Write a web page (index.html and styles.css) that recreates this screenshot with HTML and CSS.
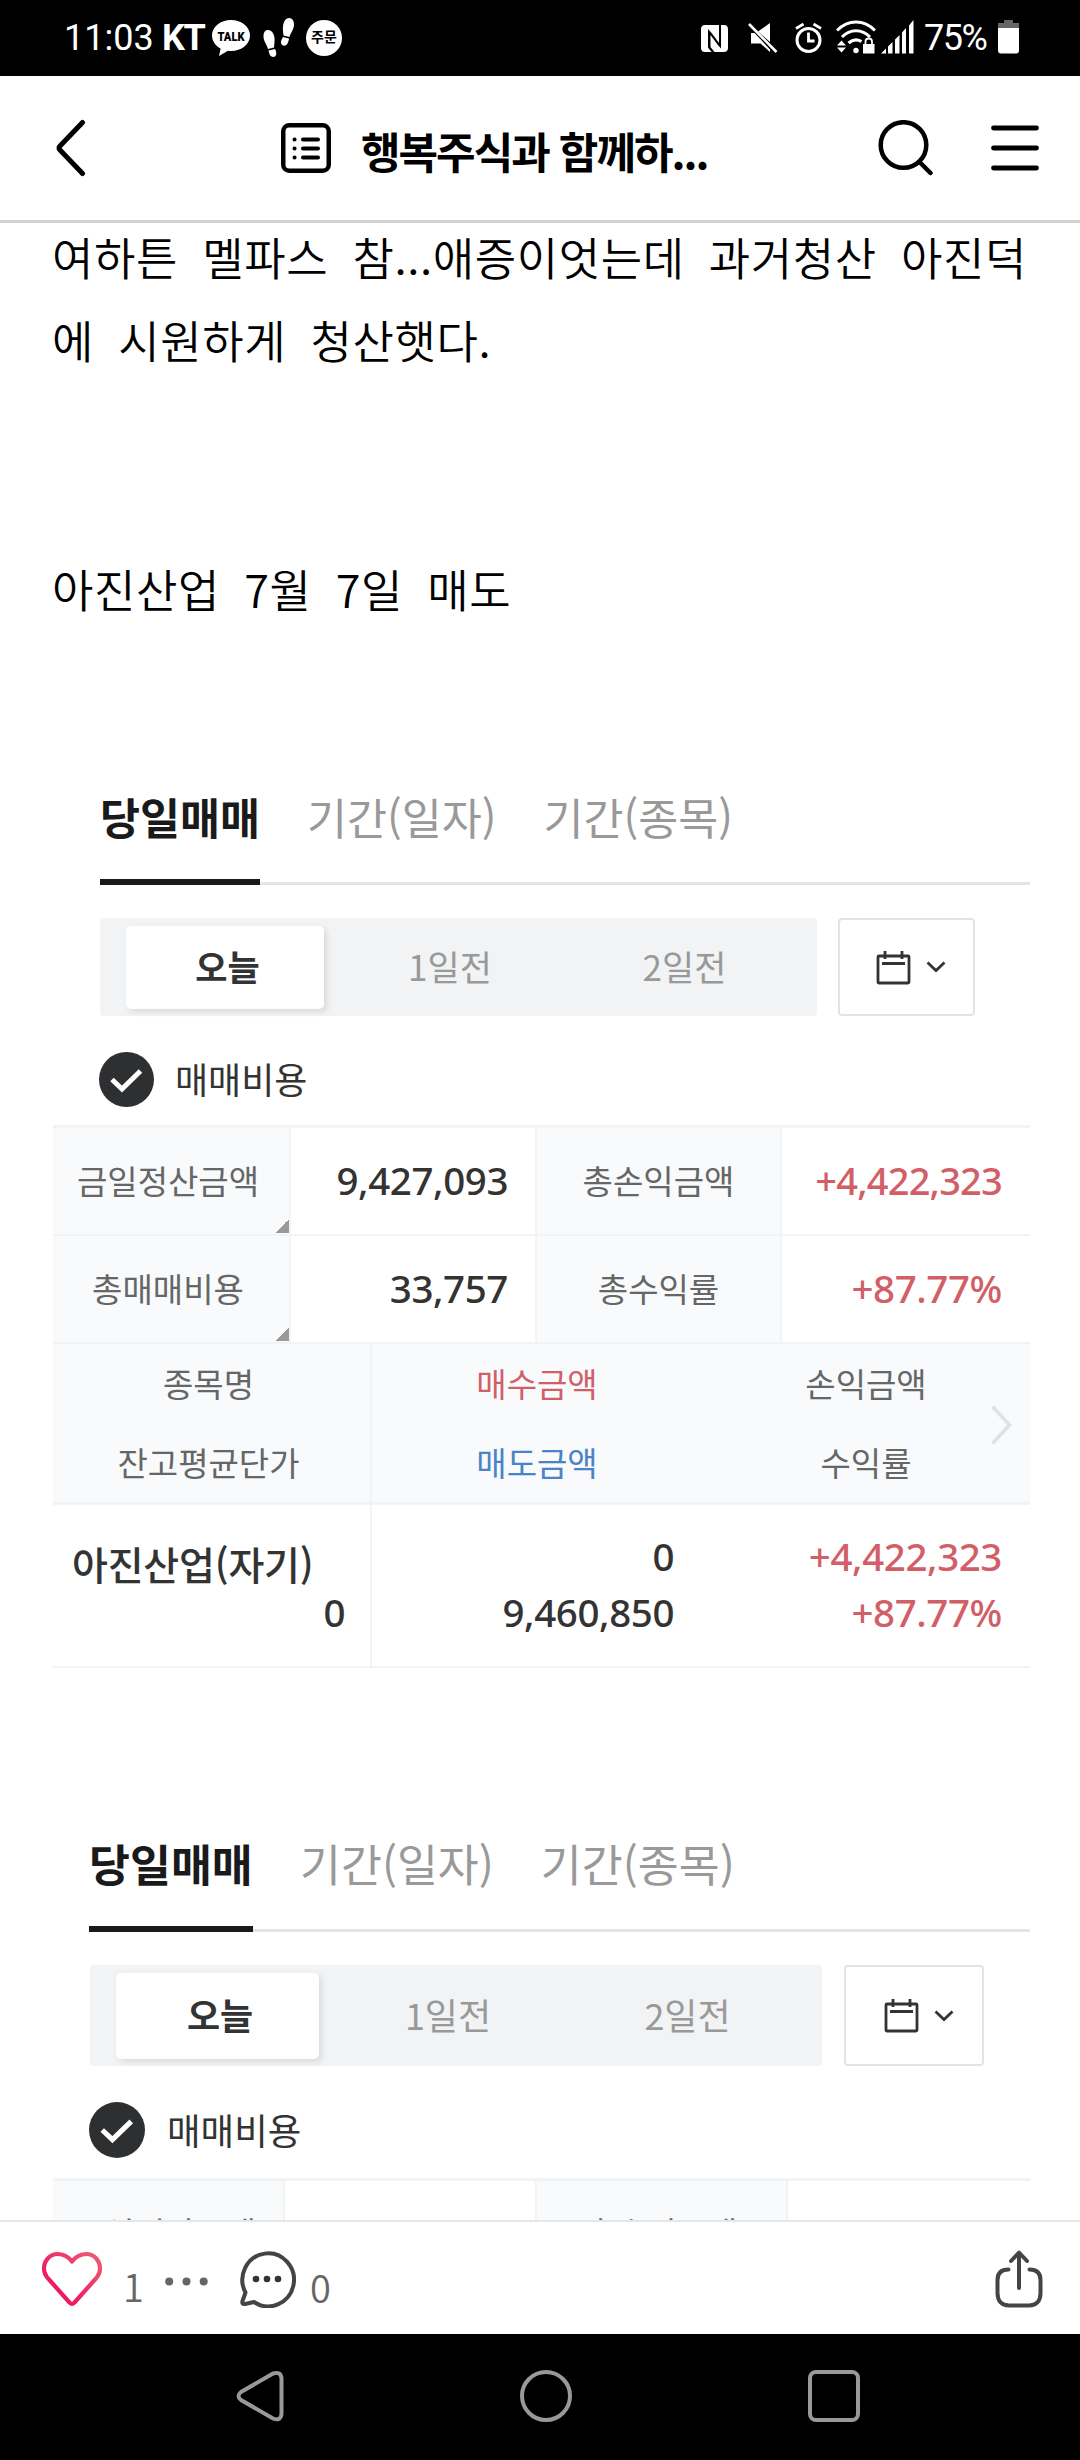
FILE: index.html
```html
<!DOCTYPE html>
<html lang="ko">
<head>
    <meta charset="UTF-8">
    <meta name="viewport" content="width=device-width, initial-scale=1.0">
    <title>행복주식과 함께하...</title>
    <link rel="stylesheet" href="styles.css">
</head>
<body>
    <!-- 상태바 -->
    <div class="status-bar">
        <span class="time">11:03</span>
        <span class="carrier">KT</span>
        <svg class="icon-talk" width="38" height="36" viewBox="0 0 38 36">
            <path fill="#fff" d="M19 0C8.500 0 0 6.800 0 15.500c0 5.500 3.500 10.300 8.600 13L7 36l9-5.200c1 .1 2 .2 3 .2 10.500 0 19-6.800 19-15.500S29.500 0 19 0z"/>
            <text x="19" y="20.500" text-anchor="middle" textLength="27" lengthAdjust="spacingAndGlyphs">TALK</text>
        </svg>
        <svg class="icon-steps" width="31" height="40" viewBox="0 0 31 40" fill="#fff">
            <path d="M5 12c4 0 6 4 6.500 8 .3 3-.2 6-.5 9.500l-6 1.500C4 27 .5 23 .5 18.500.5 14.500 2 12 5 12zM5.500 32.500l6.500-1.500c1.500 3 2 6 0 7.500-2 1.200-4.500 0-5.300-2-.5-1.300-1-2.500-1.200-4z"/>
            <path d="M26 0c3.500 0 5 3 5 6.500 0 5-3.500 8.500-4.500 12.500l-6-1.500c-.4-3.500-.9-6-.5-9C20.500 4 22.500 0 26 0zM20 19l6 1.500c-.3 2-.7 3.500-1.500 5-1 2-3.500 2.800-5.300 1.500-2-1.500-1.200-5 .8-8z"/>
        </svg>
        <span class="icon-order">주문</span>

        <svg class="icon-nfc" width="27" height="27" viewBox="0 0 27 27">
            <path fill="#fff" d="M4 0h14v18L11 8.500 7 4v18.500l3.500 4.500H4c-2.500 0-4-1.500-4-4V4c0-2.500 1.500-4 4-4zM20 0h3c2.500 0 4 1.500 4 4v19c0 2.500-1.500 4-4 4H13.500L9.500 22V10l7 9.500 3.500 4z"/>
        </svg>
        <svg class="icon-mute" width="30" height="30" viewBox="0 0 30 30">
            <path fill="#fff" d="M10 8.500L22 0v19zM3 10h3.500L22 26.500V29l-9.500-8.500H3z"/>
            <path stroke="#fff" stroke-width="2.600" d="M1 1l27.500 28"/>
        </svg>
        <svg class="icon-alarm" width="27" height="30" viewBox="0 0 27 30" fill="none" stroke="#fff" stroke-width="3">
            <circle cx="13.500" cy="17" r="11.500"/>
            <path stroke-width="2.800" d="M13.500 9.500v8.500h6M1 5.500L8.500 1M26 5.500L18.500 1"/>
        </svg>
        <svg class="icon-wifi" width="40" height="34" viewBox="0 0 40 34">
            <g fill="none" stroke="#fff" stroke-width="3">
                <path d="M1 10.500C12-1 28-1 39 10.500"/>
                <path d="M6 17c8-8.500 20-8.500 28 0"/>
                <path d="M12.500 23c4-3.500 8.500-4 13-1.500"/>
            </g>
            <circle cx="20" cy="30.500" r="2.700" fill="#fff"/>
            <path fill="#fff" d="M1 25.500l4.500-5 4.500 5zM1 27.500l4.500 5 4.500-5zM27 24h11.500v9.500H27z"/>
            <path fill="none" stroke="#fff" stroke-width="1.800" d="M29.500 25v-3.500c0-4 6.500-4 6.500 0V25"/>
        </svg>
        <svg class="icon-signal" width="33" height="34" viewBox="0 0 33 34" fill="#fff">
            <path d="M0 33.500l5-5v5zM7 26.500l4.500-4.500v11.500H7zM14 19.500l4.500-4.500v18.500H14zM21 12.500L25 8v25.500h-4zM28 5.500L32.500 0v33.500H28z"/>
        </svg>
        <span class="battery-text">75%</span>
        <svg class="icon-battery" width="21" height="34" viewBox="0 0 21 34">
            <path fill="#666" d="M6 0h9v3h6v6H0V3h6z"/>
            <path fill="#fff" d="M0 8h21v22.500c0 2-1 3-3 3H3c-2 0-3-1-3-3z"/>
        </svg>
    </div>

    <!-- 상단 헤더 -->
    <header class="header">
        <svg class="back" width="30" height="58" viewBox="0 0 30 58" fill="none" stroke="#000" stroke-width="5" stroke-linecap="round" stroke-linejoin="round">
            <path d="M26.500 3.500L4 27q-2 2 0 4l22.500 23.500"/>
        </svg>
        <svg class="board" width="50" height="50" viewBox="0 0 50 50" fill="none" stroke="#000" stroke-width="4.500" stroke-linecap="round">
            <rect x="2.250" y="2.250" width="45.500" height="45.500" rx="6"/>
            <path stroke-width="4" d="M22 16.500h15M22 25.500h15M22 34.500h15M13.500 16.500h.1M13.500 25.500h.1M13.500 34.500h.1"/>
        </svg>
        <h1 class="title">행복주식과 함께하...</h1>
        <svg class="search" width="56" height="56" viewBox="0 0 56 56" fill="none" stroke="#000" stroke-width="4.500" stroke-linecap="round">
            <circle cx="25.500" cy="25" r="22.800"/>
            <path d="M41.500 42L52.500 53"/>
        </svg>
        <svg class="menu" width="48" height="46" viewBox="0 0 48 46" stroke="#000" stroke-width="4.800" stroke-linecap="round">
            <path d="M2.500 3h43M2.500 23h43M2.500 43h43"/>
        </svg>
    </header>

    <!-- 본문 -->
    <main class="content">
        <div class="article">
            <p>여하튼 멜파스 참...애증이엇는데 과거청산 아진덕<br>에 시원하게 청산햇다.</p>
            <p><br></p>
            <p><br></p>
            <p>아진산업 7월 7일 매도</p>
        </div>

        <section class="trade">
            <div class="tabs">
                <span class="tab active">당일매매</span>
                <span class="tab">기간(일자)</span>
                <span class="tab">기간(종목)</span>
            </div>
            <div class="filter">
                <div class="segment">
                    <span class="day active">오늘</span>
                    <span class="day">1일전</span>
                    <span class="day">2일전</span>
                </div>
                <div class="calendar">
                    <svg width="35" height="35" viewBox="0 0 35 35" fill="none" stroke="#333" stroke-width="2.800">
                        <rect x="2" y="6" width="31" height="27" rx="1"/>
                        <path d="M6 13.500h23M9 1v8M26 1v8"/>
                    </svg>
                    <svg width="20" height="12" viewBox="0 0 20 12" fill="none" stroke="#333" stroke-width="2.800">
                        <path d="M1.500 1.500l8.500 8 8.500-8"/>
                    </svg>
                </div>
            </div>
            <div class="cost">
                <svg class="check" viewBox="0 0 55 55">
                    <circle cx="27.500" cy="27.500" r="27.500" fill="#2d2f31"/>
                    <path fill="none" stroke="#fff" stroke-width="5" d="M13 27.500l10 9.500 18.500-18"/>
                </svg>
                <span>매매비용</span>
            </div>

            <div class="summary">
                <div class="label more">금일정산금액</div>
                <div class="value">9,427,093</div>
                <div class="label">총손익금액</div>
                <div class="value up narrow">+4,422,323</div>
                <div class="label more">총매매비용</div>
                <div class="value">33,757</div>
                <div class="label">총수익률</div>
                <div class="value up">+87.77%</div>
            </div>
            <div class="list-head">
                <div class="col-name"><span>종목명</span><span>잔고평균단가</span></div>
                <div class="col-amount"><span class="up">매수금액</span><span class="down">매도금액</span></div>
                <div class="col-profit"><span>손익금액</span><span>수익률</span></div>
                <svg class="next" width="21" height="40" viewBox="0 0 21 40" fill="none" stroke="#e0e1e2" stroke-width="3.500">
                    <path d="M1.500 1.500L18.500 20l-17 18.500"/>
                </svg>
            </div>
            <div class="list-row">
                <div class="col-name"><span class="stock">아진산업(자기)</span><span>0</span></div>
                <div class="col-amount"><span>0</span><span>9,460,850</span></div>
                <div class="col-profit up"><span>+4,422,323</span><span>+87.77%</span></div>
            </div>
        </section>

        <section class="trade large">
            <div class="tabs">
                <span class="tab active">당일매매</span>
                <span class="tab">기간(일자)</span>
                <span class="tab">기간(종목)</span>
            </div>
            <div class="filter">
                <div class="segment">
                    <span class="day active">오늘</span>
                    <span class="day">1일전</span>
                    <span class="day">2일전</span>
                </div>
                <div class="calendar">
                    <svg width="35" height="35" viewBox="0 0 35 35" fill="none" stroke="#333" stroke-width="2.800">
                        <rect x="2" y="6" width="31" height="27" rx="1"/>
                        <path d="M6 13.500h23M9 1v8M26 1v8"/>
                    </svg>
                    <svg width="20" height="12" viewBox="0 0 20 12" fill="none" stroke="#333" stroke-width="2.800">
                        <path d="M1.500 1.500l8.500 8 8.500-8"/>
                    </svg>
                </div>
            </div>
            <div class="cost">
                <svg class="check" viewBox="0 0 55 55">
                    <circle cx="27.500" cy="27.500" r="27.500" fill="#2d2f31"/>
                    <path fill="none" stroke="#fff" stroke-width="5" d="M13 27.500l10 9.500 18.500-18"/>
                </svg>
                <span>매매비용</span>
            </div>
            <div class="summary">
                <div class="label">금일정산금액</div>
                <div class="value">353,447</div>
                <div class="label">총손익금액</div>
                <div class="value down">-1,087,884</div>
            </div>
        </section>
    </main>

    <!-- 하단 툴바 -->
    <div class="toolbar">
        <svg class="heart" width="62" height="56" viewBox="0 0 62 56" fill="none" stroke="url(#heartColor)" stroke-width="4.200" stroke-linejoin="round">
            <defs>
                <linearGradient id="heartColor" x1="0" y1="1" x2="1" y2="0">
                    <stop offset="0.300" stop-color="#ee1c63"/>
                    <stop offset="1" stop-color="#ee5d74"/>
                </linearGradient>
            </defs>
            <path d="M31 10.500C26 4 21 3 16.500 3 9 3 3 9.500 3 17.500c0 5 2 8 5 11L28.500 51.500q2.500 2.500 5 0L54 28.500c3-3 5-6 5-11C59 9.500 53 3 45.500 3 41 3 36 4 31 10.500z"/>
        </svg>
        <span class="count like">1</span>
        <svg class="dots" width="43" height="9" viewBox="0 0 43 9" fill="#666">
            <circle cx="4.200" cy="4.500" r="4"/>
            <circle cx="21.500" cy="4.500" r="4"/>
            <circle cx="38.700" cy="4.500" r="4"/>
        </svg>
        <svg class="comment" width="58" height="58" viewBox="0 0 58 58">
            <path fill="none" stroke="#444" stroke-width="4" stroke-linejoin="round" d="M7.500 42.500A25.800 26.500 0 1 1 16 52L7 54Q3.500 54.500 4.500 51z"/>
            <g fill="#333">
                <circle cx="18" cy="29" r="3.300"/>
                <circle cx="29" cy="29" r="3.300"/>
                <circle cx="40" cy="29" r="3.300"/>
            </g>
        </svg>
        <span class="count reply">0</span>
        <svg class="share" width="48" height="58" viewBox="0 0 48 58" fill="none" stroke="#444" stroke-width="4" stroke-linecap="round" stroke-linejoin="round">
            <path d="M24 38V3M16 11l8-8.500 8 8.500M13.500 19.500C6 19.500 2.500 23.500 2.500 30v13C2.500 51 6.500 55.500 14 55.500h20c7.500 0 11.500-4.500 11.500-12.500V30c0-6.500-3.500-10.500-11-10.500"/>
        </svg>
    </div>

    <!-- 내비게이션 바 -->
    <nav class="nav-bar">
        <svg width="48" height="52" viewBox="0 0 48 52" fill="none" stroke="#999" stroke-width="4">
            <path d="M37 3.500L5 22q-5 4 0 8l32 18.500q8 3 8.500-5V8.500Q45 1 37 3.500z"/>
        </svg>
        <svg width="52" height="52" viewBox="0 0 52 52" fill="none" stroke="#999" stroke-width="4">
            <circle cx="26" cy="26" r="24"/>
        </svg>
        <svg width="52" height="52" viewBox="0 0 52 52" fill="none" stroke="#999" stroke-width="4">
            <rect x="2" y="2" width="48" height="48" rx="6"/>
        </svg>
    </nav>
</body>
</html>
```
FILE: styles.css
```css
* {
    margin: 0;
    padding: 0;
    box-sizing: border-box;
}

body {
    width: 1080px;
    height: 2460px;
    display: flex;
    flex-direction: column;
    overflow: hidden;
    background: #fff;
    color: #000;
    font-family: 'Noto Sans CJK KR', sans-serif;
}

svg {
    display: block;
    flex: none;
}

/* 상태바 */
.status-bar {
    display: flex;
    align-items: flex-start;
    flex: none;
    height: 76px;
    padding-top: 18px;
    background: #000;
    color: #fff;
    font-family: Roboto, 'Noto Sans CJK KR', sans-serif;
    font-size: 36px;
    line-height: 40px;
    white-space: nowrap;
}

.time {
    width: 98px;
    margin-left: 64px;
}

.carrier {
    width: 50px;
    font-weight: 700;
    letter-spacing: -1.5px;
}

.icon-talk {
    margin-top: 2px;
    overflow: visible;
}

.icon-talk text {
    font: 900 13px Roboto, sans-serif;
}

.icon-steps {
    margin-left: 13px;
}

.icon-order {
    width: 36px;
    height: 36px;
    margin: 2px 0 0 12px;
    border-radius: 50%;
    background: #fff;
    color: #000;
    font-size: 14px;
    font-weight: 700;
    line-height: 35px;
    text-align: center;
}

.icon-nfc {
    margin: 7px 0 0 359px;
}

.icon-mute {
    margin: 5px 0 0 20px;
}

.icon-alarm {
    margin: 5px 0 0 17px;
}

.icon-wifi {
    margin: 2px 0 0 14px;
}

.icon-signal {
    margin: 2px 0 0 5px;
}

.battery-text {
    width: 74px;
    margin-left: 10px;
    letter-spacing: -1.5px;
}

.icon-battery {
    margin-top: 2px;
}

/* 상단 헤더 */
.header {
    display: flex;
    align-items: center;
    flex: none;
    height: 147px;
    border-bottom: 3px solid #d2d2d2;
}

.back {
    margin-left: 56px;
}

.board {
    margin-left: 195px;
}

.title {
    width: 360px;
    margin: 3px 0 0 30px;
    font-size: 43px;
    font-weight: 700;
    letter-spacing: -2px;
    line-height: 60px;
    white-space: nowrap;
}

.search {
    margin-left: 157px;
}

.menu {
    margin-left: 57px;
}

/* 본문 */
.content {
    flex: 1;
    min-height: 0;
    overflow: hidden;
}

.article {
    margin: -8px 0 0 52px;
    font-size: 45px;
    font-weight: 350;
    letter-spacing: 0.6px;
    line-height: 83px;
    word-spacing: 11px;
    white-space: nowrap;
}

.trade {
    width: 977px;
    margin: 156px 0 0 53px;
    color: #333;
}

.tabs {
    display: flex;
    gap: 47px;
    margin-left: 47px;
    background: linear-gradient(#e3e5e5, #e3e5e5) bottom / 100% 3px no-repeat;
    font-size: 43.5px;
    color: #999;
}

.tab {
    line-height: 62px;
    padding-bottom: 31px;
    border-bottom: 6px solid transparent;
    white-space: nowrap;
}

.tab.active {
    width: 160px;
    color: #1a1a1a;
    font-weight: 700;
    border-color: #1a1a1a;
}

.filter {
    display: flex;
    gap: 21px;
    margin: 33px 0 0 47px;
}

.segment {
    display: flex;
    width: 717px;
    height: 98px;
    padding: 8px 0 7px 26px;
    border-radius: 4px;
    background: #f1f3f4;
    color: #999;
    font-size: 35px;
}

.day {
    flex: none;
    width: 252px;
    line-height: 80px;
    text-align: center;
}

.day:last-child {
    width: 217px;
}

.day.active {
    width: 198px;
    padding-left: 5px;
    border-radius: 5px;
    background: #fff;
    color: #333;
    font-weight: 700;
    box-shadow: 3px 3px 6px rgba(0, 0, 0, 0.1);
}

.calendar {
    display: flex;
    align-items: center;
    justify-content: center;
    gap: 15px;
    width: 137px;
    height: 98px;
    padding-left: 9px;
    border: 2px solid #e2e4e4;
    border-radius: 4px;
}

.cost {
    display: flex;
    align-items: center;
    gap: 21px;
    margin: 36px 0 18px 46px;
    font-size: 36px;
    line-height: 53px;
}

.cost span {
    margin-top: -2px;
}

.check {
    width: 55px;
    height: 55px;
}

.summary {
    display: grid;
    grid-template-columns: 238px 244px 247px 1fr;
    grid-auto-rows: 108px;
    border-top: 3px solid #f1f3f4;
}

.label,
.value {
    border-bottom: 2px solid #f1f3f4;
    line-height: 104px;
    white-space: nowrap;
}

.label {
    padding-right: 6px;
    border-right: 2px solid #f1f3f4;
    background: #f8fafb;
    color: #666;
    font-size: 33px;
    text-align: center;
}

.label:nth-child(4n + 3) {
    padding-right: 0;
    border-left: 2px solid #f1f3f4;
}

/* 셀 오른쪽 아래 접힌 모서리 */
.label.more {
    background: linear-gradient(135deg, transparent 50%, #999 50%) right bottom 1px / 14px 14px no-repeat #f8fafb;
}

.value {
    padding-right: 27px;
    font-family: 'Noto Sans', 'Noto Sans CJK KR', sans-serif;
    font-size: 38.5px;
    font-weight: 500;
    letter-spacing: -0.4px;
    text-align: right;
}

.value.up {
    padding-right: 28px;
}

.value.narrow {
    font-size: 38px;
    letter-spacing: -0.8px;
}

.up {
    color: #d25f68;
}

.down {
    color: #4a83c6;
}

.list-head {
    display: flex;
    position: relative;
    height: 161px;
    border-bottom: 3px solid #f1f3f4;
    background: #f8fafb;
    color: #666;
    font-size: 33px;
    line-height: 79px;
    text-align: center;
}

.list-head span,
.list-row span {
    display: block;
    white-space: nowrap;
}

.col-name {
    width: 319px;
    border-right: 2px solid #f1f3f4;
}

.col-amount {
    width: 330px;
}

.col-profit {
    flex: 1;
}

.list-head .col-name {
    padding-right: 6px;
}

.next {
    position: absolute;
    top: 61px;
    right: 18px;
}

.list-row {
    display: flex;
    height: 163px;
    border-bottom: 2px solid #f1f3f4;
    font-family: 'Noto Sans', 'Noto Sans CJK KR', sans-serif;
    font-size: 38.5px;
    font-weight: 500;
    letter-spacing: -0.4px;
    line-height: 56px;
    text-align: right;
}

.list-row > div {
    padding: 23px 28px 0 0;
}

.list-row .col-name {
    padding: 30px 25px 0 19px;
}

.list-row .stock {
    height: 49px;
    font-family: 'Noto Sans CJK KR', sans-serif;
    font-size: 39px;
    letter-spacing: -0.2px;
    text-align: left;
}

/* 두 번째 화면은 조금 더 크게 보인다 */
.large {
    margin-top: 165px;
}

.large .tabs {
    margin-left: 36px;
    font-size: 44.5px;
}

.large .tab {
    line-height: 60px;
    padding-bottom: 33px;
}

.large .tab.active {
    width: 164px;
}

.large .filter {
    gap: 22px;
    margin-left: 37px;
}

.large .segment {
    width: 732px;
    height: 101px;
    font-size: 36px;
}

.large .day {
    width: 258px;
    line-height: 83px;
}

.large .day:last-child {
    width: 221px;
}

.large .day.active {
    width: 203px;
}

.large .calendar {
    width: 140px;
    height: 101px;
}

.large .cost {
    margin: 36px 0 20px 36px;
    gap: 22px;
    font-size: 36.5px;
}

.large .check {
    width: 56px;
    height: 56px;
}

.large .summary {
    grid-template-columns: 232px 250px 253px 1fr;
    grid-auto-rows: 111px;
}

.large .label,
.large .value {
    line-height: 102px;
}

/* 하단 툴바 */
.toolbar {
    display: flex;
    align-items: flex-start;
    flex: none;
    height: 114px;
    border-top: 2px solid #e6e7e8;
    background: #fff;
}

.heart {
    margin: 29px 0 0 41px;
}

.count {
    width: 22px;
    color: #666;
    font-size: 38px;
    font-weight: 350;
    line-height: 50px;
}

.like {
    margin: 39px 0 0 20px;
}

.dots {
    margin: 55px 0 0 20px;
}

.comment {
    margin: 28px 0 0 30px;
}

.reply {
    margin: 40px 0 0 14px;
}

.share {
    margin: 28px 0 0 663px;
}

/* 내비게이션 바 */
.nav-bar {
    display: flex;
    flex: none;
    gap: 236px;
    height: 126px;
    padding: 36px 0 0 236px;
    background: #000;
}
```
